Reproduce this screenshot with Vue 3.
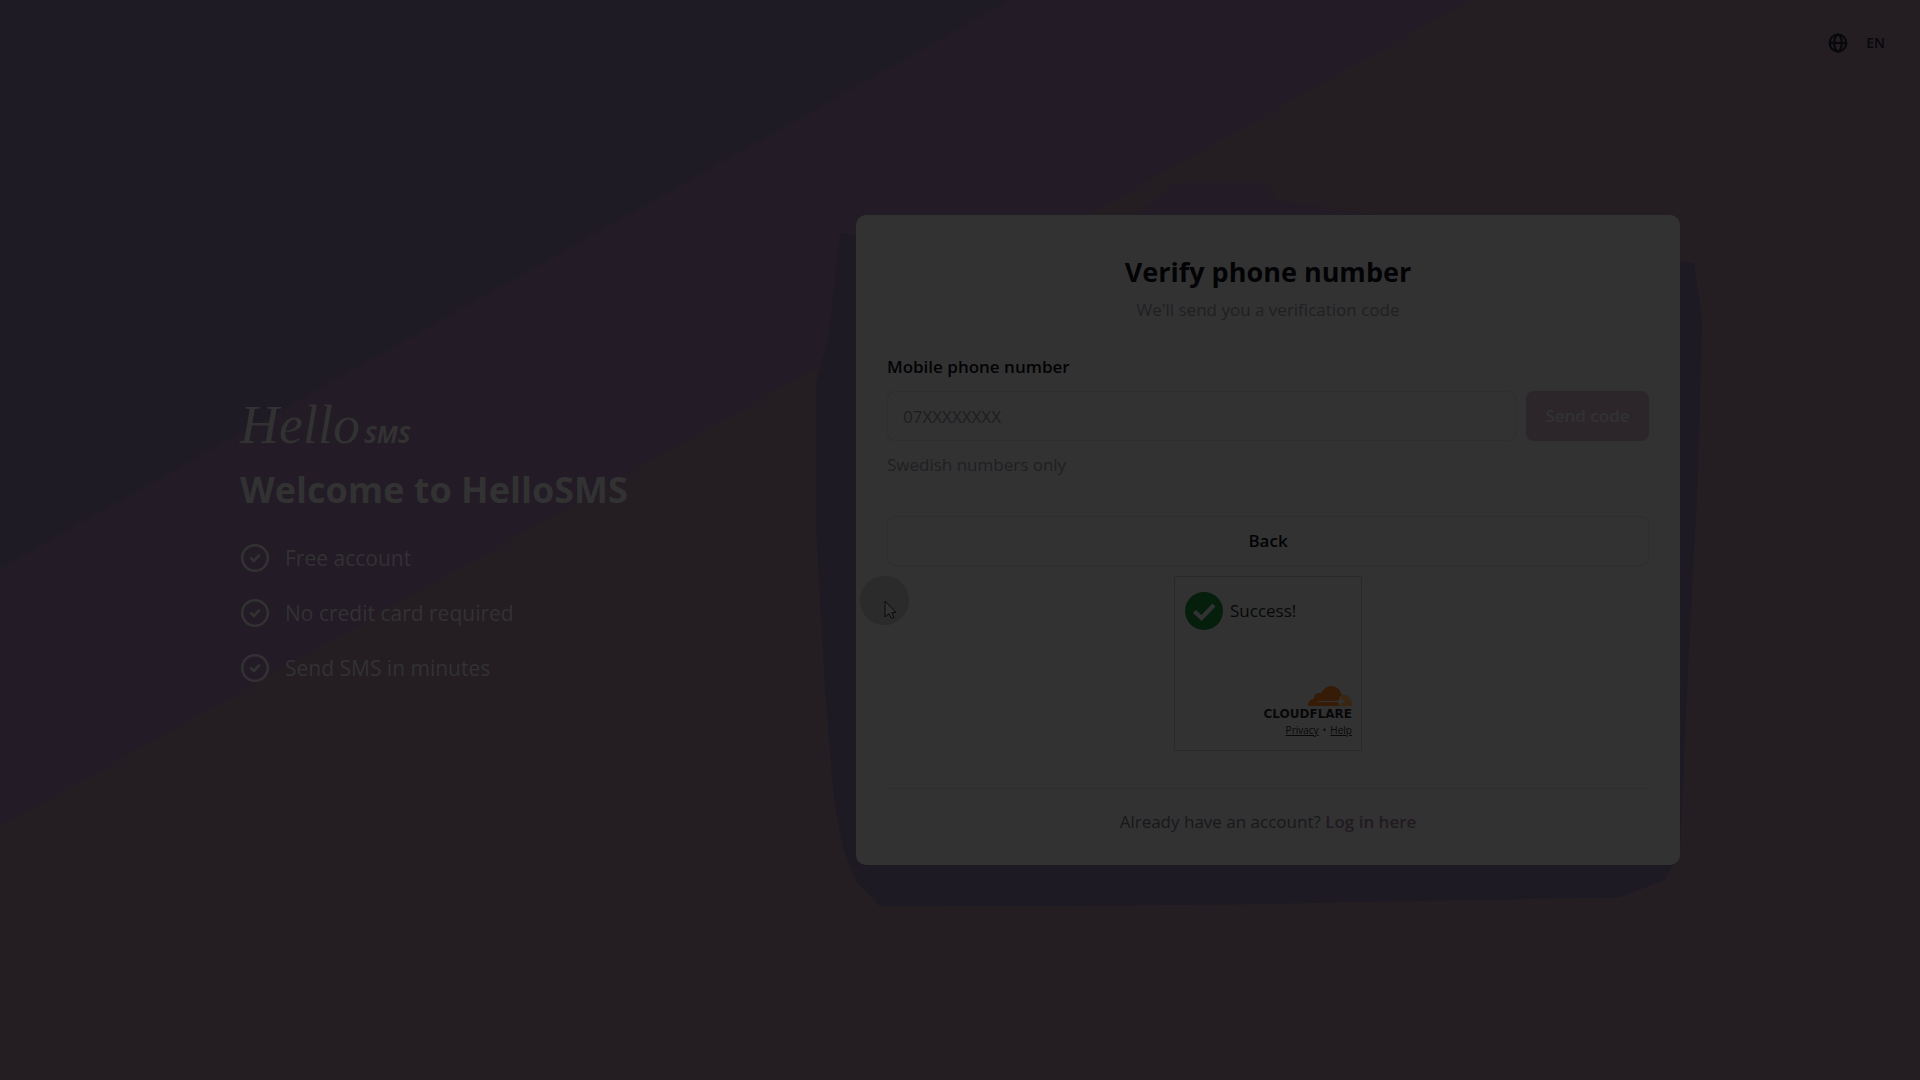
<template>
    <div class="page">
        <header class="topbar">
            <button type="button" class="lang">
                <svg class="lang__icon" viewBox="0 0 24 24" fill="none" stroke="currentColor" stroke-width="2.6">
                    <circle cx="12" cy="12" r="10" />
                    <ellipse cx="12" cy="12" rx="4.5" ry="10" />
                    <path d="M2 12h20" />
                </svg>
                <span>{{ lang }}</span>
            </button>
        </header>
        <main class="content">
            <section class="intro">
                <div class="logo">
                    <span class="logo__script">Hello</span>
                    <span class="logo__sms">SMS</span>
                </div>
                <h1 class="intro__title">Welcome to HelloSMS</h1>
                <ul class="benefits">
                    <li v-for="item in benefits" :key="item" class="benefits__item">
                        <svg class="benefits__icon" viewBox="0 0 30 30" fill="none" stroke="currentColor"
                            stroke-width="2.6" stroke-linecap="round" stroke-linejoin="round">
                            <circle cx="15" cy="15" r="12.8" />
                            <path d="M11 15.200l2.800 2.800 5.200-5.600" />
                        </svg>
                        <span>{{ item }}</span>
                    </li>
                </ul>
            </section>
            <section class="card__wrap">
                <div class="card">
                    <h2 class="card__title">Verify phone number</h2>
                    <p class="card__subtitle">We'll send you a verification code</p>
                    <form class="form" @submit.prevent>
                        <label class="form__label" for="phone">Mobile phone number</label>
                        <div class="form__row">
                            <input id="phone" v-model="phone" class="form__input" type="tel"
                                placeholder="07XXXXXXXX">
                            <button type="submit" class="form__send" :disabled="!phone">Send code</button>
                        </div>
                        <p class="form__hint">Swedish numbers only</p>
                        <button type="button" class="form__back">Back</button>
                    </form>
                    <div class="captcha">
                        <div class="captcha__status">
                            <svg class="captcha__icon" viewBox="0 0 38 38">
                                <circle cx="19" cy="19" r="19" fill="#051f0c" />
                                <path d="M9.500 19.500l7 6.500 12.500-13" fill="none" stroke="#323233"
                                    stroke-width="4.4" />
                            </svg>
                            <span>Success!</span>
                        </div>
                        <div class="captcha__brand">
                            <svg class="captcha__cloud" viewBox="0 0 44 20">
                                <path d="M0 20c0-4 2-7 6-7-.5-4 3-7 7-5.500C15 3 19 0 23 0c5 0 9 3 10.500 8L32 20z"
                                    fill="#361b06" />
                                <path d="M33 9c6-1.500 11 3 11 11H30z" fill="#3a2611" />
                                <path d="M10 15.500h20" stroke="#323233" stroke-width="1.2" />
                                <path d="M32.500 9.500l1.300 4.500 4.200 1.700-4.200 1.500-1.300 3-1.300-3-2.700-1.500 2.700-1.700z"
                                    fill="#323233" />
                            </svg>
                            <span class="captcha__name">CLOUDFLARE</span>
                            <div class="captcha__links">
                                <a href="#">Privacy</a>
                                <span>•</span>
                                <a href="#">Help</a>
                            </div>
                        </div>
                    </div>
                    <p class="card__footer">Already have an account? <a href="#" class="card__link">Log in here</a></p>
                </div>
                <div class="pointer">
                    <svg class="pointer__arrow" viewBox="0 0 14 20">
                        <path d="M1 1v16l4-3.500 2.500 5 2.500-1-2.200-5H12z" fill="#323233" stroke="#0a0a0b" />
                    </svg>
                </div>
            </section>
        </main>
    </div>
</template>
<script setup>
import { ref } from 'vue'

const lang = ref('EN')
const phone = ref('')
const benefits = ['Free account', 'No credit card required', 'Send SMS in minutes']
</script>
<style>
body {
    margin: 0;
    background: #241e22;
}
</style>
<style scoped>
* {
    box-sizing: border-box;
}

.page {
    position: relative;
    display: flex;
    flex-direction: column;
    min-height: 100vh;
    color: #030305;
    font-family: "Open Sans", "Noto Sans", sans-serif;
    font-size: 17px;
    line-height: 24px;
    background: linear-gradient(to bottom right, #1e1b24 26.2%, #231b26 26.4%, #231b26 38.2%, #241e22 38.4%);
}

button,
input {
    font: inherit;
}

a {
    color: inherit;
}

p,
h1,
h2,
ul {
    margin: 0;
    padding: 0;
}

.topbar {
    position: absolute;
    top: 0;
    right: 0;
    padding: 31px 35px;
}

.lang {
    display: flex;
    align-items: center;
    gap: 18px;
    padding: 0;
    border: none;
    background: transparent;
    color: #08070b;
    font-size: 14px;
    font-weight: 600;
    cursor: pointer;
}

.lang__icon {
    width: 20px;
    height: 20px;
}

.content {
    flex: 1;
    display: grid;
    grid-template-columns: minmax(0, 69fr) minmax(0, 103fr);
    gap: 64px;
    align-items: center;
    padding: 0 12.5%;
}

.intro {
    padding-bottom: 4px;
    color: #323233;
}

.logo {
    display: flex;
    align-items: baseline;
    gap: 4px;
    line-height: 64px;
}

.logo__script {
    font-family: "Liberation Serif", serif;
    font-size: 54px;
    font-style: italic;
}

.logo__sms {
    font-size: 24px;
    font-style: italic;
    font-weight: 700;
}

.intro__title {
    font-size: 36px;
    font-weight: 700;
    line-height: 48px;
}

.benefits {
    display: flex;
    flex-direction: column;
    gap: 25px;
    margin-top: 29px;
    list-style: none;
    font-size: 21px;
    line-height: 30px;
}

.benefits__item {
    display: flex;
    align-items: center;
    gap: 15px;
}

.benefits__icon {
    width: 30px;
    height: 30px;
}

.card__wrap {
    position: relative;
    isolation: isolate;
}

/* uneven dark halo around the card */
.card__wrap::before {
    content: "";
    position: absolute;
    z-index: -1;
    inset: 0 -24px -44px -40px;
    background: #1e1a24;
    clip-path: polygon(2.7% 2.7%, 1.4% 18%, 0 24%, 0 45%, 1% 68%, 2% 84%, 3% 91%, 4.5% 96%, 7.2% 99.6%, 45% 99.4%, 90.5% 98.3%, 95.6% 95.8%, 97.3% 91.5%, 98.2% 65.5%, 99.3% 38%, 99.8% 15%, 98.9% 7%, 97.3% 6.6%);
}

.card__wrap::after {
    content: "";
    position: absolute;
    z-index: -1;
    inset: -32px 16% 98% 32%;
    background: #231b26;
    clip-path: polygon(13% 0, 34% 0, 37% 40%, 66% 80%, 100% 100%, 0 100%);
}

.card {
    display: flex;
    flex-direction: column;
    padding: 37px 31px 31px;
    border-radius: 10px;
    background: #323233;
}

.card__title {
    font-size: 27px;
    font-weight: 700;
    line-height: 40px;
    text-align: center;
}

.card__subtitle {
    margin-top: 6px;
    color: #1f2022;
    text-align: center;
}

.form {
    display: flex;
    flex-direction: column;
    margin-top: 33px;
}

.form__label {
    font-weight: 600;
}

.form__row {
    display: flex;
    gap: 10px;
    margin-top: 12px;
}

.form__input {
    flex: 1;
    min-width: 0;
    height: 50px;
    padding: 0 15px;
    border: 1px solid #2e2e2f;
    border-radius: 8px;
    outline: none;
    background: transparent;
    color: #030305;
}

.form__input::placeholder {
    color: #1d1e20;
    opacity: 1;
}

.form__send {
    width: 123px;
    height: 50px;
    padding: 0;
    border: none;
    border-radius: 8px;
    background: #2c262b;
    color: #323233;
    font-weight: 600;
}

.form__hint {
    margin-top: 12px;
    color: #1f2022;
}

.form__back {
    height: 50px;
    margin-top: 39px;
    border: 1px solid #2e2e2f;
    border-radius: 8px;
    background: transparent;
    color: #030305;
    font-weight: 600;
    cursor: pointer;
}

.captcha {
    display: flex;
    flex-direction: column;
    justify-content: space-between;
    align-self: center;
    width: 188px;
    height: 175px;
    margin-top: 10px;
    padding: 15px 9px 12px 10px;
    border: 1px solid #29292a;
    border-radius: 2px;
}

.captcha__status {
    display: flex;
    align-items: center;
    gap: 7px;
    color: #080808;
}

.captcha__icon {
    width: 38px;
    height: 38px;
}

.captcha__brand {
    display: flex;
    flex-direction: column;
    align-items: flex-end;
    color: #080808;
}

.captcha__cloud {
    width: 44px;
    height: 20px;
}

.captcha__name {
    font-family: "DejaVu Sans", sans-serif;
    font-size: 12px;
    font-weight: 700;
    line-height: 16px;
}

.captcha__links {
    display: flex;
    gap: 4px;
    font-size: 10px;
    line-height: 16px;
}

.card__footer {
    margin-top: 37px;
    padding-top: 21px;
    border-top: 1px solid #2e2e2f;
    color: #17181a;
    text-align: center;
}

.card__link {
    color: #211a20;
    font-weight: 600;
    text-decoration: none;
}

.pointer {
    position: absolute;
    top: 361px;
    left: 4px;
    width: 49px;
    height: 49px;
    border-radius: 50%;
    background: #2b2b2c;
    pointer-events: none;
}

.pointer__arrow {
    position: absolute;
    top: 24px;
    left: 24px;
    width: 14px;
    height: 20px;
}
</style>
